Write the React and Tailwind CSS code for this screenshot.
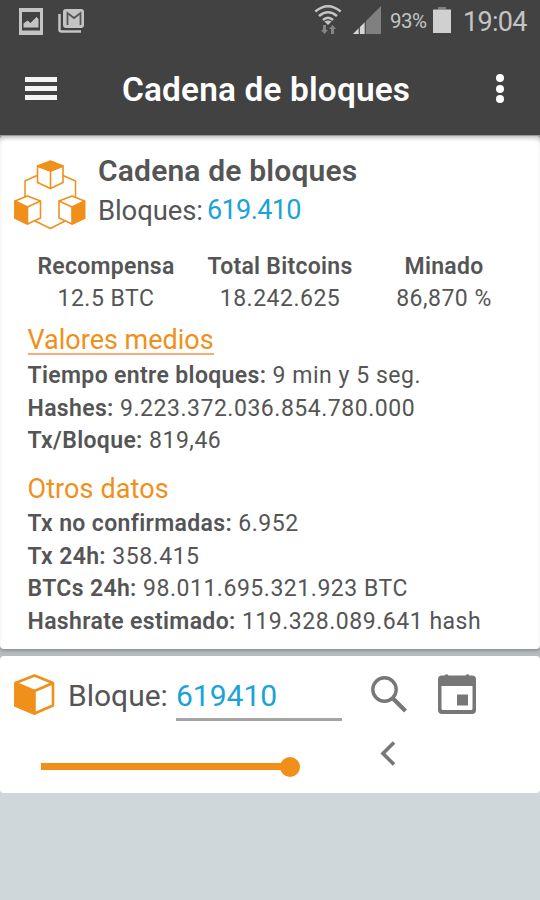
import { useState } from "react";

const summary = [
  { label: "Recompensa", value: "12.5 BTC", width: "w-[174px]" },
  { label: "Total Bitcoins", value: "18.242.625", width: "w-[174px]" },
  { label: "Minado", value: "86,870 %", width: "w-[154px]" },
];

const averages = [
  { label: "Tiempo entre bloques:", value: "9 min y 5 seg." },
  { label: "Hashes:", value: "9.223.372.036.854.780.000" },
  { label: "Tx/Bloque:", value: "819,46" },
];

const others = [
  { label: "Tx no confirmadas:", value: "6.952" },
  { label: "Tx 24h:", value: "358.415" },
  { label: "BTCs 24h:", value: "98.011.695.321.923 BTC" },
  { label: "Hashrate estimado:", value: "119.328.089.641 hash" },
];

function StatusBar() {
  return (
    <div className="flex h-[43px] items-center pl-[19px] text-[#c4c4c4]">
      <svg className="-mt-px" width="24" height="27" viewBox="0 0 24 27">
        <path d="M0 0h24v27H0zM3 4v18.500h18V4z" fill="currentColor" fillRule="evenodd" />
        <path d="M4.500 19.500v-4l4-3 3 2.500 6-6 2 2v8.500z" fill="currentColor" />
      </svg>
      <svg className="-mt-px ml-[15px]" width="27" height="24" viewBox="0 0 27 24">
        <rect x="5" y="0" width="21" height="19" rx="3" fill="currentColor" />
        <path d="M1.500 5v15.500q0 2 2 2H23" fill="none" stroke="currentColor" strokeWidth="2.500" />
        <path d="M9.500 16V4l6.500 5 6.500-5v12" fill="none" stroke="#555" strokeWidth="1.800" />
      </svg>
      <svg className="-mt-[5px] ml-[229px]" width="28" height="31" viewBox="0 0 28 31">
        <g fill="none" stroke="currentColor" strokeWidth="2.600">
          <path d="M1.300 7.500q12.700-10.500 25.400 0" />
          <path d="M5 12q9-7.500 18 0" />
          <path d="M9 16q5-4.500 10 0" />
        </g>
        <path d="M10.500 17.500q3.500-2 7 0L14 21z" fill="currentColor" />
        <path d="M9 21h3v5h2l-3.500 4L7 26h2zM17 30h3v-5h2l-3.500-4-3.500 4h2z" fill="#858585" />
      </svg>
      <svg className="-mt-[3px] ml-[11px]" width="28" height="28" viewBox="0 0 29 29">
        <path d="M0 29 29 0v29z" fill="#808080" />
        <path d="M0 29l6-6v6zM7 29v-7l5-5v12z" fill="#d6d6d6" />
        <path d="M6.500 22v7M12.800 15v14" stroke="#444" />
      </svg>
      <span className="ml-[9px] w-[38px] text-[20.5px] leading-none tracking-[-0.5px]">93%</span>
      <svg className="-mt-[3px] ml-[5px]" width="18" height="26" viewBox="0 0 18 26">
        <path d="M5 0h8v2.500H5z" fill="#808080" />
        <path d="M0 2.500h18V26H0z" fill="#d0d0d0" />
      </svg>
      <span className="ml-[12px] mt-px text-[27px] leading-none tracking-[-0.7px]">19:04</span>
    </div>
  );
}

function AppBar() {
  return (
    <div className="flex h-[92px] items-center pl-[25px] text-white">
      <button className="-mt-[2px] flex w-8 flex-col gap-1" aria-label="Menu">
        <span className="h-[5px] bg-[#f4f4f4]" />
        <span className="h-[5px] bg-[#f4f4f4]" />
        <span className="h-[5px] bg-[#f4f4f4]" />
      </button>
      <h1 className="ml-[65px] mt-px w-[290px] whitespace-nowrap text-[33.4px] font-semibold leading-none tracking-[0.16px]">
        Cadena de bloques
      </h1>
      <button className="-mt-px ml-[84px] flex flex-col gap-[2.500px]" aria-label="Más opciones">
        <span className="size-[8px] rounded-full bg-white" />
        <span className="size-[8px] rounded-full bg-white" />
        <span className="size-[8px] rounded-full bg-white" />
      </button>
    </div>
  );
}

function ChainIcon() {
  return (
    <svg className="mt-[9px]" width="72" height="70" viewBox="0 0 72 70" fill="none" stroke="#f0901a" strokeWidth="1.600" strokeLinejoin="round">
      <path d="M23 15.500 11 21v16M49 15.500 61.500 21v16M21 61l15.500 7.500L51 61" strokeWidth="1.500" />
      <path d="M23.500 6v16.500L36.500 28.500 49 22.500V6l-12.500 5zM36.500 11v17.500" fill="#fff" />
      <path d="M23.500 6 36.500 1 49 6 36.500 11z" fill="#f0901a" />
      <path d="M1 41 13.500 36 26.500 41v17L13.500 64 1 58z" fill="#fff" />
      <path d="M1 41 13.500 47v17L1 58z" fill="#f0901a" />
      <path d="M13.500 47 26.500 41" />
      <path d="M45 41 58 36l12.500 5v17L58 64l-13-6z" fill="#fff" />
      <path d="M58 47 70.500 41v17L58 64z" fill="#f0901a" />
      <path d="M58 47 45 41" />
    </svg>
  );
}

function DataRow({ label, value }) {
  return (
    <p className="h-[32.6px] whitespace-nowrap text-[23px] leading-[32.6px] tracking-[0.53px]">
      <b className="font-semibold tracking-[0.35px]">{label}</b> {value}
    </p>
  );
}

function ChainCard() {
  return (
    <section className="h-[513px] rounded-[4px] bg-white pt-[15px] shadow-[inset_0_4px_4px_-2px_#bbb,0_2px_3px_#8b9496]">
      <div className="flex h-[79px] items-start pl-[14px]">
        <ChainIcon />
        <div className="ml-[12px] whitespace-nowrap">
          <h2 className="text-[30px] font-semibold leading-[40px] tracking-[0.17px]">Cadena de bloques</h2>
          <p className="flex gap-[4px] text-[27.5px] leading-[39px] tracking-[-0.1px]">
            <span>Bloques:</span>
            <span className="text-[27px] tracking-[-0.6px] text-[#1ba3d6]">619.410</span>
          </p>
        </div>
      </div>
      <div className="mt-[21px] flex pl-[19px] text-center text-[23px] leading-8">
        {summary.map((item) => (
          <div key={item.label} className={item.width}>
            <p className="font-semibold tracking-[0.28px]">{item.label}</p>
            <p className="tracking-[0.5px]">{item.value}</p>
          </div>
        ))}
      </div>
      <div className="mt-[6px] pl-[27.500px]">
        <h3 className="h-[39px] text-[27px] leading-[39px] text-[#f0901a]">
          <span className="inline-block h-[34px] border-b-2 border-[#f6ab78]">Valores medios</span>
        </h3>
        {averages.map((row) => (
          <DataRow key={row.label} {...row} />
        ))}
        <h3 className="mt-[12px] h-[38.500px] text-[27px] leading-[38px] tracking-[0.1px] text-[#f0901a]">Otros datos</h3>
        {others.map((row) => (
          <DataRow key={row.label} {...row} />
        ))}
      </div>
    </section>
  );
}

function BlockCard() {
  const [block, setBlock] = useState("619410");

  return (
    <section className="mt-[7px] h-[137px] rounded-[4px] bg-white pt-[17px]">
      <div className="flex h-[48px] pl-[14px] text-[30px]">
        <svg className="mt-px" width="41" height="41" viewBox="0 0 41 41" stroke="#f0901a" strokeWidth="2.600" strokeLinejoin="round">
          <path d="M1.500 9 20.500 1.500 39 9v22.500L20.500 39.500 1.500 31.500z" fill="#fff" />
          <path d="M1.500 9 20.500 17v22.500l-19-8z" fill="#f0901a" />
          <path d="M20.500 17 39 9" />
        </svg>
        <label htmlFor="block" className="ml-[13px] w-[108px] whitespace-nowrap leading-[45px]">Bloque:</label>
        <input
          id="block"
          value={block}
          onChange={(e) => setBlock(e.target.value)}
          className="h-[48px] w-[166px] border-b-[3px] border-[#a5a5a5] pb-[1px] text-[#1ba3d6] outline-none"
        />
        <svg className="ml-[28px] mt-[2px]" width="38" height="38" viewBox="0 0 38 38" fill="none" stroke="#777">
          <circle cx="14.500" cy="14.500" r="11.700" strokeWidth="3.400" />
          <path d="M23 23.500 35.500 36" strokeWidth="4.200" />
        </svg>
        <svg className="ml-[30px] mt-[1px]" width="38" height="40" viewBox="0 0 38 40" fill="#777">
          <path d="M4 1.500h2.500q2-2.500 4 0h17q2-2.500 4 0H34q4 0 4 4V36q0 4-4 4H4q-4 0-4-4V5.500q0-4 4-4zM3.500 12v22.500q0 1.500 1.500 1.500h28q1.500 0 1.500-1.500V12z" fillRule="evenodd" />
          <path d="M19 20.500h11v11H19z" />
        </svg>
      </div>
      <div className="flex pl-[41px] pt-[20px]">
        <div className="mt-[15.500px] flex h-5 w-[259px] items-center">
          <div className="h-[6.500px] flex-1 bg-[#f0901a]" />
          <div className="-ml-px size-[20px] rounded-full bg-[#f0901a]" />
        </div>
        <svg className="ml-[80px]" width="16" height="25" viewBox="0 0 16 25" fill="none" stroke="#777" strokeWidth="3.600">
          <path d="M14 1.500 3 12.500l11 11" />
        </svg>
      </div>
    </section>
  );
}

export default function App() {
  return (
    <div className="h-[900px] w-[540px] overflow-hidden bg-[#cfd7da] font-[Roboto,'Liberation_Sans',sans-serif] text-[#555]">
      <header className="h-[135px] bg-[#424242]">
        <StatusBar />
        <AppBar />
      </header>
      <main className="bg-[linear-gradient(#999,#999_8px,#b4bcbe_8px,#b4bcbe_600px,#cfd7da_600px)] pt-px">
        <ChainCard />
        <BlockCard />
      </main>
    </div>
  );
}
